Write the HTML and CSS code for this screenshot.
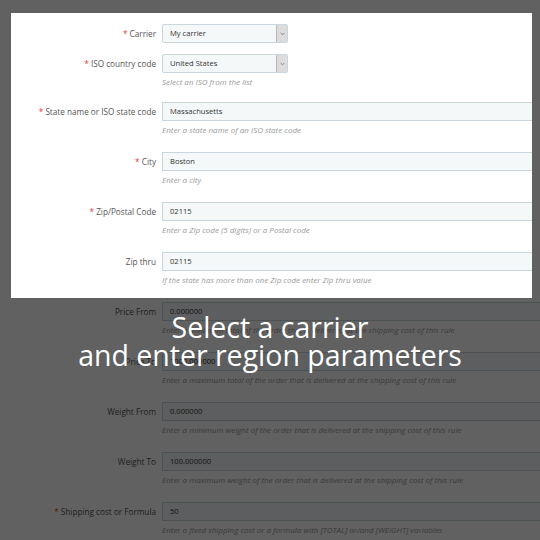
FILE: index.html
```html
<!DOCTYPE html>
<html lang="en">
<head>
<meta charset="utf-8">
<title>Carrier rule</title>
<link rel="stylesheet" href="styles.css">
</head>
<body>
<div class="page">
  <form class="form">
    <section class="spot">
      <div class="row row-plain">
        <label class="label"><span class="req">*</span> Carrier</label>
        <div class="field">
          <div class="select"><span class="select-value">My carrier</span><span class="select-btn"><svg width="5" height="4" viewBox="0 0 6 4"><polyline points="0.8,0.8 3,3 5.2,0.8" fill="none" stroke="#666" stroke-width="0.9"/></svg></span></div>
        </div>
      </div>
      <div class="row row-tight">
        <label class="label"><span class="req">*</span> ISO country code</label>
        <div class="field">
          <div class="select"><span class="select-value">United States</span><span class="select-btn"><svg width="5" height="4" viewBox="0 0 6 4"><polyline points="0.8,0.8 3,3 5.2,0.8" fill="none" stroke="#666" stroke-width="0.9"/></svg></span></div>
          <p class="help">Select an ISO from the list</p>
        </div>
      </div>
      <div class="row">
        <label class="label"><span class="req">*</span> State name or ISO state code</label>
        <div class="field">
          <div class="input">Massachusetts</div>
          <p class="help">Enter a state name of an ISO state code</p>
        </div>
      </div>
      <div class="row">
        <label class="label"><span class="req">*</span> City</label>
        <div class="field">
          <div class="input">Boston</div>
          <p class="help">Enter a city</p>
        </div>
      </div>
      <div class="row">
        <label class="label"><span class="req">*</span> Zip/Postal Code</label>
        <div class="field">
          <div class="input">02115</div>
          <p class="help">Enter a Zip code (5 digits) or a Postal code</p>
        </div>
      </div>
      <div class="row row-last">
        <label class="label">Zip thru</label>
        <div class="field">
          <div class="input">02115</div>
          <p class="help">If the state has more than one Zip code enter Zip thru value</p>
        </div>
      </div>
    </section>
    <div class="row">
      <label class="label">Price From</label>
      <div class="field">
        <div class="input">0.000000</div>
        <p class="help">Enter a minimum total of the order that is delivered at the shipping cost of this rule</p>
      </div>
    </div>
    <div class="row">
      <label class="label">Price To</label>
      <div class="field">
        <div class="input">1000.000000</div>
        <p class="help">Enter a maximum total of the order that is delivered at the shipping cost of this rule</p>
      </div>
    </div>
    <div class="row">
      <label class="label">Weight From</label>
      <div class="field">
        <div class="input">0.000000</div>
        <p class="help">Enter a minimum weight of the order that is delivered at the shipping cost of this rule</p>
      </div>
    </div>
    <div class="row">
      <label class="label">Weight To</label>
      <div class="field">
        <div class="input">100.000000</div>
        <p class="help">Enter a maximum weight of the order that is delivered at the shipping cost of this rule</p>
      </div>
    </div>
    <div class="row">
      <label class="label"><span class="req">*</span> Shipping cost or Formula</label>
      <div class="field">
        <div class="input">50</div>
        <p class="help">Enter a fixed shipping cost or a formula with [TOTAL] or/and [WEIGHT] variables</p>
      </div>
    </div>
  </form>
  <div class="dim"></div>
  <p class="caption">Select a carrier<br>and enter region parameters</p>
</div>
</body>
</html>
```
FILE: styles.css
```css
html, body {
  margin: 0;
  padding: 0;
  width: 540px;
  height: 540px;
  overflow: hidden;
}
body {
  background: #fff;
  font-family: "Open Sans", "Liberation Sans", sans-serif;
}
.page {
  position: relative;
  width: 540px;
  height: 540px;
  overflow: hidden;
}
.form {
  margin: 0;
  padding-top: 13px;
}
.spot {
  position: relative;
  z-index: 2;
  background: #fff;
  margin: 0 8px 4px 11px;
  padding-top: 11px;
  overflow: hidden;
}
.row {
  display: grid;
  grid-template-columns: 156px 1fr;
  column-gap: 6px;
  padding-bottom: 16px;
}
.spot .row {
  grid-template-columns: 145px 1fr;
}
.spot .row-plain { padding-bottom: 11px; }
.spot .row-tight { padding-bottom: 14px; }
.spot .row-last { padding-bottom: 12px; }
.label {
  text-align: right;
  font-size: 8.2px;
  line-height: 19px;
  color: #555;
  white-space: nowrap;
}
.req {
  color: #e3393c;
}
.field {
  min-width: 0;
}
.input {
  height: 19px;
  box-sizing: border-box;
  border: 1px solid #c9d7dc;
  background: #f5f8f9;
  font-size: 7.6px;
  line-height: 17px;
  padding: 0 7px;
  color: #333;
  margin-right: -14px;
  white-space: nowrap;
}
.select {
  display: flex;
  width: 126px;
  height: 19px;
  box-sizing: border-box;
  border: 1px solid #c9d7dc;
  background: #f5f8f9;
  border-radius: 2px;
}
.select-value {
  flex: 1;
  font-size: 7.6px;
  line-height: 17px;
  padding: 0 7px;
  color: #333;
}
.select-btn {
  width: 10px;
  display: flex;
  align-items: center;
  justify-content: center;
  background: #dcdcdc;
  border-left: 1px solid #b8b8b8;
}
.help {
  margin: 3px 0 0;
  font-size: 8px;
  line-height: 12px;
  font-style: italic;
  color: #9a9a9a;
  white-space: nowrap;
}
.dim {
  position: absolute;
  inset: 0;
  z-index: 1;
  background: rgba(0, 0, 0, 0.62);
}
.caption {
  position: absolute;
  z-index: 3;
  top: 313px;
  left: 0;
  right: 0;
  margin: 0;
  text-align: center;
  color: #fff;
  font-family: "Open Sans", "Liberation Sans", sans-serif;
  font-size: 28.5px;
  font-weight: 500;
  line-height: 28px;
}
```
